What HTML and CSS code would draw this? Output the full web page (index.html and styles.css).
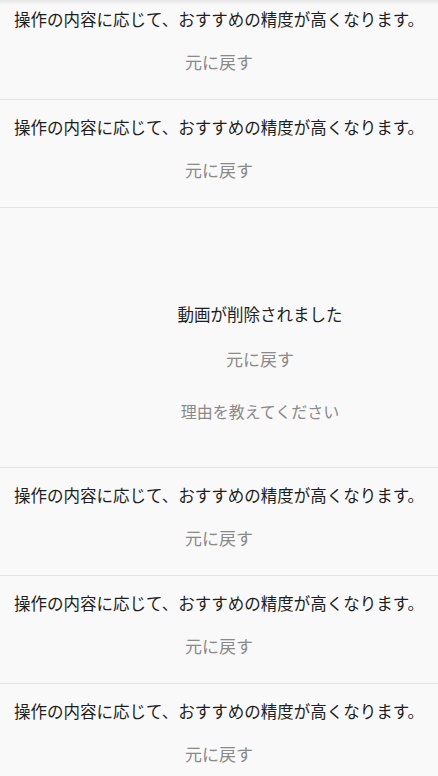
FILE: index.html
```html
<!DOCTYPE html>
<html lang="ja">
<head>
<meta charset="utf-8">
<link rel="stylesheet" href="styles.css">
</head>
<body>
<div class="feed">
  <section class="item">
    <p class="msg">操作の内容に応じて、おすすめの精度が高くなります。</p>
    <p class="undo">元に戻す</p>
  </section>
  <section class="item">
    <p class="msg">操作の内容に応じて、おすすめの精度が高くなります。</p>
    <p class="undo">元に戻す</p>
  </section>
  <section class="item removed">
    <p class="msg">動画が削除されました</p>
    <p class="undo">元に戻す</p>
    <p class="reason">理由を教えてください</p>
  </section>
  <section class="item">
    <p class="msg">操作の内容に応じて、おすすめの精度が高くなります。</p>
    <p class="undo">元に戻す</p>
  </section>
  <section class="item">
    <p class="msg">操作の内容に応じて、おすすめの精度が高くなります。</p>
    <p class="undo">元に戻す</p>
  </section>
  <section class="item">
    <p class="msg">操作の内容に応じて、おすすめの精度が高くなります。</p>
    <p class="undo">元に戻す</p>
  </section>
</div>
<div class="top-shadow"></div>
</body>
</html>
```

FILE: styles.css
```css
html, body {
  margin: 0;
  padding: 0;
  background: #f9f9f9;
}
body {
  font-family: "Noto Sans CJK JP", "Noto Sans", sans-serif;
  overflow: hidden;
}
.top-shadow {
  position: fixed;
  top: 0;
  left: 0;
  right: 0;
  height: 6px;
  background: linear-gradient(rgba(0,0,0,0.07), rgba(0,0,0,0));
  pointer-events: none;
}
.feed {
  display: flex;
  flex-direction: column;
}
.item {
  display: flex;
  flex-direction: column;
  align-items: center;
  gap: 19px;
  padding: 15px 0 25px;
  border-bottom: 1px solid #e2e2e2;
}
.item:first-child {
  padding-top: 7px;
}
.item p {
  margin: 0;
  line-height: 24px;
  white-space: nowrap;
}
.msg {
  font-size: 16.5px;
  color: #1e1e1e;
}
.undo {
  font-size: 17px;
  color: #8a8a8a;
}
.removed {
  padding: 94px 0 44px 82px;
}
.removed .undo {
  margin-top: 2px;
}
.removed .reason {
  font-size: 16px;
  color: #8a8a8a;
  margin-top: 9px;
}
```
